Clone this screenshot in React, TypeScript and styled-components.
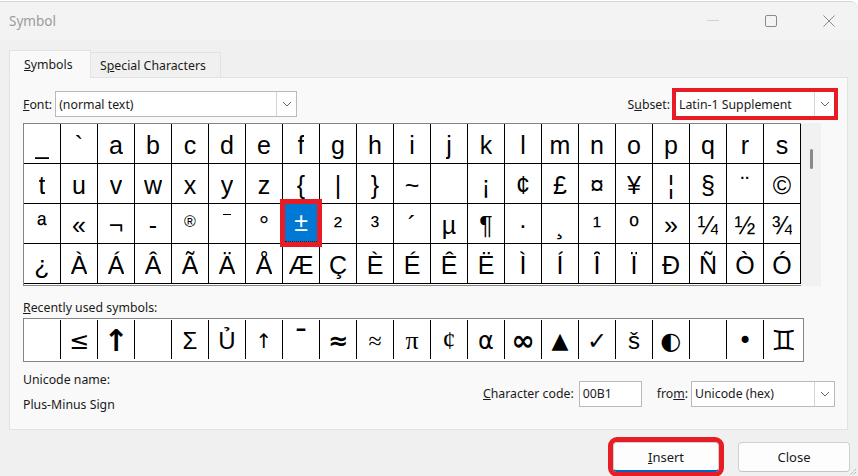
import React from 'react';
import styled, { createGlobalStyle } from 'styled-components';

const GlobalStyle = createGlobalStyle`
  html, body {
    margin: 0;
    padding: 0;
    background: #ffffff;
  }
  * {
    box-sizing: border-box;
  }
`;

const uiFont = `"Noto Sans", "Open Sans", sans-serif`;

const Window = styled.div`
  width: 858px;
  height: 476px;
  margin-top: 1px;
  background: #f0f0f0;
  border-top: 1px solid #d6d6d6;
  border-top-right-radius: 8px;
  display: flex;
  flex-direction: column;
  font-family: ${uiFont};
  font-size: 12px;
  color: #1a1a1a;
  overflow: hidden;
  position: relative;
`;

const TitleBar = styled.div`
  height: 38px;
  flex: none;
  background: #f3f3f3;
  display: flex;
  align-items: center;
  padding-left: 9px;
`;

const Title = styled.div`
  flex: 1;
  font-size: 13.5px;
  color: #9b9b9b;
`;

const WinButton = styled.div`
  width: 58px;
  height: 38px;
  display: flex;
  align-items: center;
  justify-content: center;
`;

const Tabs = styled.div`
  display: flex;
  align-items: flex-end;
  margin: 9px 0 0 9px;
  height: 28px;
  flex: none;
  position: relative;
  z-index: 1;
`;

const Tab = styled.div<{ $active?: boolean }>`
  height: ${(p) => (p.$active ? '28px' : '26px')};
  padding: 0 ${(p) => (p.$active ? '14px' : '9px')};
  display: flex;
  align-items: center;
  font-size: 12.3px;
  white-space: nowrap;
  background: ${(p) => (p.$active ? '#f9f9f9' : '#f0f0f0')};
  border: 1px solid #e2e2e2;
  border-bottom: ${(p) => (p.$active ? '1px solid #f9f9f9' : '1px solid #e2e2e2')};
  margin-bottom: -1px;
  ${(p) => (p.$active ? 'width: 82px;' : 'margin-left: -1px; width: 131px;')}
`;

const Panel = styled.div`
  flex: none;
  height: 353px;
  margin: 0 10px 0 9px;
  background: #f9f9f9;
  border: 1px solid #e2e2e2;
  padding: 13px 12px 0 13px;
  display: flex;
  flex-direction: column;
`;

const TopRow = styled.div`
  display: flex;
  align-items: center;
  height: 26px;
`;

const Label = styled.span`
  font-size: 12.3px;
  white-space: nowrap;
`;

const Spacer = styled.div`
  flex: 1;
`;

const Select = styled.div<{ $width: number }>`
  width: ${(p) => p.$width}px;
  height: 26px;
  background: #ffffff;
  border: 1px solid #b9b9b9;
  display: flex;
  align-items: stretch;
  margin-left: 3px;
`;

const SelectText = styled.div`
  flex: 1;
  display: flex;
  align-items: center;
  padding-left: 3px;
  font-size: 12.3px;
`;

const SelectArrow = styled.div`
  width: 20px;
  border-left: 1px solid #d5d5d5;
  display: flex;
  align-items: center;
  justify-content: center;
`;

const Highlight = styled.div`
  outline: 4px solid #e81c24;
  outline-offset: -1px;
  display: flex;
  margin-left: 5px;
  & > div {
    margin-left: 0;
  }
`;

const GridRow = styled.div`
  display: flex;
  margin-top: 6px;
`;

const CharGrid = styled.div`
  display: grid;
  grid-template-columns: repeat(21, 37px);
  grid-auto-rows: 40px;
  border-left: 1px solid #858585;
  border-top: 1px solid #858585;
  border-bottom: 1px solid #858585;
  padding-bottom: 1px;
  background: #ffffff;
`;

const Cell = styled.div<{ $small?: boolean }>`
  position: relative;
  border-right: 1px solid #000000;
  border-bottom: 1px solid #000000;
  height: 40px;
  overflow: visible;
  text-align: center;
  font-family: "Liberation Sans", Arial, sans-serif;
  font-size: ${(p) => (p.$small ? '16px' : '25px')};
  line-height: ${(p) => (p.$small ? '36px' : '42px')};
  color: #000000;
  background: #ffffff;
`;

const SelectedBox = styled.div`
  position: absolute;
  left: -3px;
  top: -5px;
  width: 42px;
  height: 48px;
  border: 5px solid #e81c24;
  background: #0078d4;
  color: #ffffff;
  line-height: 36px;
  font-size: 25px;
  z-index: 2;
  &::after {
    content: '';
    position: absolute;
    left: 0;
    right: 0;
    bottom: 0;
    border-bottom: 1px dotted #222222;
  }
`;

const Glyph = styled.span`
  display: inline-block;
  height: 39px;
  overflow: hidden;
`;

const ScrollTrack = styled.div`
  width: 20px;
  height: 163px;
  background: #f1f1f1;
  display: flex;
  justify-content: center;
  padding-top: 26px;
`;

const ScrollThumb = styled.div`
  width: 3px;
  height: 20px;
  border-radius: 2px;
  background: #8a8a8a;
`;

const SectionLabel = styled.div`
  margin-top: 12px;
  height: 18px;
  display: flex;
  align-items: center;
  font-size: 12.3px;
`;

const RecentGrid = styled.div`
  margin-top: 2px;
  width: 781px;
  height: 44px;
  display: grid;
  grid-template-columns: repeat(20, 37px) 39px;
  border: 1px solid #858585;
  background: #ffffff;
`;

const RecentCell = styled.div<{ $font?: string; $size?: number; $weight?: number }>`
  border-right: 1px solid #000000;
  margin: 1px 0 2px;
  text-align: center;
  font-family: ${(p) => p.$font || '"Liberation Sans", Arial, sans-serif'};
  font-size: ${(p) => p.$size || 26}px;
  font-weight: ${(p) => p.$weight || 400};
  line-height: 42px;
  color: #000000;
  overflow: hidden;
  &:last-child {
    border-right: none;
  }
`;

const InfoRow = styled.div`
  display: flex;
  margin-top: 9px;
`;

const InfoColumn = styled.div`
  display: flex;
  flex-direction: column;
  gap: 8px;
  flex: 1;
  font-size: 12.3px;
`;

const CodeRow = styled.div`
  display: flex;
  align-items: center;
  margin-top: 9px;
  height: 27px;
`;

const CodeInput = styled.div`
  width: 63px;
  height: 26px;
  margin-left: 5px;
  background: #ffffff;
  border: 1px solid #b9b9b9;
  padding: 3px 0 0 3px;
  font-size: 12.3px;
`;

const FromLabel = styled(Label)`
  margin-left: 15px;
`;

const Footer = styled.div`
  flex: 1;
  display: flex;
  justify-content: flex-end;
  align-items: flex-start;
  gap: 19px;
  padding: 12px 8px 0 0;
`;

const Button = styled.div<{ $default?: boolean }>`
  width: ${(p) => (p.$default ? '106px' : '112px')};
  height: 30px;
  background: #fdfdfd;
  border: 1px solid #d0d0d0;
  border-bottom: ${(p) => (p.$default ? '2px solid #0067c0' : '1px solid #c4c4c4')};
  border-radius: 4px;
  display: flex;
  align-items: center;
  justify-content: center;
  font-size: 13px;
  ${(p) => (p.$default ? 'outline: 5px solid #e81c24; outline-offset: 0px;' : '')}
`;

const Grip = styled.svg`
  position: absolute;
  right: 1px;
  bottom: 1px;
`;

const Chevron = () => (
  <svg width="10" height="6" viewBox="0 0 10 6">
    <path d="M1 1 L5 5 L9 1" fill="none" stroke="#666" strokeWidth="1" />
  </svg>
);

const rows: string[][] = [
  ['_', '`', 'a', 'b', 'c', 'd', 'e', 'f', 'g', 'h', 'i', 'j', 'k', 'l', 'm', 'n', 'o', 'p', 'q', 'r', 's'],
  ['t', 'u', 'v', 'w', 'x', 'y', 'z', '{', '|', '}', '~', '', '¡', '¢', '£', '¤', '¥', '¦', '§', '¨', '©'],
  ['ª', '«', '¬', '-', '®', '¯', '°', '±', '²', '³', '´', 'µ', '¶', '·', '¸', '¹', 'º', '»', '¼', '½', '¾'],
  ['¿', 'À', 'Á', 'Â', 'Ã', 'Ä', 'Å', 'Æ', 'Ç', 'È', 'É', 'Ê', 'Ë', 'Ì', 'Í', 'Î', 'Ï', 'Ð', 'Ñ', 'Ò', 'Ó'],
];

const smallGlyphs = ['®', '¯'];

const serif = '"Liberation Serif", "DejaVu Serif", serif';
const dejavu = '"DejaVu Sans", sans-serif';

const recent: { ch: string; font?: string; size?: number; weight?: number }[] = [
  { ch: '' },
  { ch: '≤', font: dejavu, size: 24 },
  { ch: '↑', font: dejavu, size: 30, weight: 700 },
  { ch: '' },
  { ch: 'Σ', font: '"Liberation Sans", sans-serif', size: 24 },
  { ch: 'Ủ', font: '"Liberation Sans", sans-serif', size: 24 },
  { ch: '↑', font: dejavu, size: 20 },
  { ch: 'ˉ', font: dejavu, size: 28, weight: 700 },
  { ch: '≈', font: dejavu, size: 24, weight: 700 },
  { ch: '≈', font: serif, size: 24 },
  { ch: 'π', font: serif, size: 26 },
  { ch: '¢', font: serif, size: 26 },
  { ch: 'α', font: dejavu, size: 24 },
  { ch: '∞', font: dejavu, size: 28, weight: 700 },
  { ch: '▲', font: dejavu, size: 22 },
  { ch: '✓', font: dejavu, size: 24, weight: 700 },
  { ch: 'š', font: '"Liberation Sans", sans-serif', size: 24 },
  { ch: '◐', font: dejavu, size: 24 },
  { ch: '' },
  { ch: '•', font: dejavu, size: 24 },
  { ch: '♊', font: dejavu, size: 28 },
];

export default function App() {
  return (
    <>
      <GlobalStyle />
      <Window>
        <TitleBar>
          <Title>Symbol</Title>
          <WinButton>
            <svg width="12" height="2" viewBox="0 0 12 2">
              <rect x="0" y="0" width="12" height="1" fill="#d0d0d0" />
            </svg>
          </WinButton>
          <WinButton>
            <svg width="12" height="12" viewBox="0 0 12 12">
              <rect x="0.5" y="0.5" width="11" height="11" rx="1.5" fill="none" stroke="#8a8a8a" />
            </svg>
          </WinButton>
          <WinButton>
            <svg width="12" height="12" viewBox="0 0 12 12">
              <path d="M0.5 0.5 L11.5 11.5 M11.5 0.5 L0.5 11.5" stroke="#8a8a8a" strokeWidth="1" />
            </svg>
          </WinButton>
        </TitleBar>

        <Tabs>
          <Tab $active>
            <span><u>S</u>ymbols</span>
          </Tab>
          <Tab>
            <span>S<u>p</u>ecial Characters</span>
          </Tab>
        </Tabs>

        <Panel>
          <TopRow>
            <Label><u>F</u>ont:</Label>
            <Select $width={242}>
              <SelectText>(normal text)</SelectText>
              <SelectArrow><Chevron /></SelectArrow>
            </Select>
            <Spacer />
            <Label>S<u>u</u>bset:</Label>
            <Highlight>
              <Select $width={160}>
                <SelectText>Latin-1 Supplement</SelectText>
                <SelectArrow><Chevron /></SelectArrow>
              </Select>
            </Highlight>
          </TopRow>

          <GridRow>
            <CharGrid>
              {rows.map((row, r) =>
                row.map((ch, c) => (
                  <Cell key={`${r}-${c}`} $small={smallGlyphs.includes(ch)}>
                    {r === 2 && c === 7 ? (
                      <SelectedBox>{ch}</SelectedBox>
                    ) : (
                      <Glyph>{ch}</Glyph>
                    )}
                  </Cell>
                ))
              )}
            </CharGrid>
            <ScrollTrack>
              <ScrollThumb />
            </ScrollTrack>
          </GridRow>

          <SectionLabel>
            <span><u>R</u>ecently used symbols:</span>
          </SectionLabel>
          <RecentGrid>
            {recent.map((item, i) => (
              <RecentCell key={i} $font={item.font} $size={item.size} $weight={item.weight}>
                {item.ch}
              </RecentCell>
            ))}
          </RecentGrid>

          <InfoRow>
            <InfoColumn>
              <span>Unicode name:</span>
              <span>Plus-Minus Sign</span>
            </InfoColumn>
            <CodeRow>
              <Label><u>C</u>haracter code:</Label>
              <CodeInput>00B1</CodeInput>
              <FromLabel>fro<u>m</u>:</FromLabel>
              <Select $width={144}>
                <SelectText>Unicode (hex)</SelectText>
                <SelectArrow><Chevron /></SelectArrow>
              </Select>
            </CodeRow>
          </InfoRow>
        </Panel>

        <Footer>
          <Button $default>
            <span><u>I</u>nsert</span>
          </Button>
          <Button>Close</Button>
        </Footer>

        <Grip width="8" height="8" viewBox="0 0 8 8">
          <path d="M7 1 L1 7 M7 4 L4 7" stroke="#9a9a9a" strokeWidth="1" strokeDasharray="1 1" />
        </Grip>
      </Window>
    </>
  );
}
